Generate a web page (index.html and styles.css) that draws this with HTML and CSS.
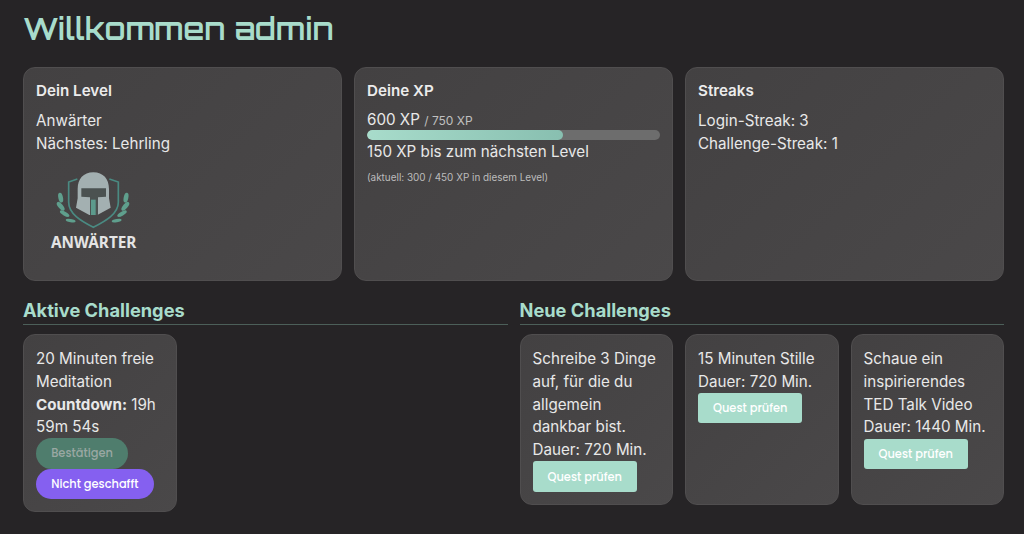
FILE: index.html
```html
<!DOCTYPE html>
<html lang="de">
<head>
<meta charset="utf-8">
<title>Dashboard</title>
<link rel="stylesheet" href="styles.css">
</head>
<body>
<h1 class="welcome">Willkommen admin</h1>
<section class="stats">
  <article class="card">
    <h2 class="card-title">Dein Level</h2>
    <div>Anwärter</div>
    <div>Nächstes: Lehrling</div>
    <svg class="badge" viewBox="0 0 330 270" width="110" height="90" role="img" aria-label="Anwärter">
      <path d="M112 42 L86 51 V112 C86 146 122 168 160 187 C198 168 235 146 235 112 V51 L208 42" fill="none" stroke="#4a8a82" stroke-width="5"/>
      <path d="M160 22 C130 22 113 42 113 72 V100 L108 128 L148 150 H172 L212 128 L207 100 V72 C207 42 190 22 160 22Z" fill="#a3b0b1"/>
      <path d="M124 70 H198 V95 L174 97 V150 H150 V97 L124 95Z" fill="#4b5251"/>
      <rect x="153" y="104" width="14" height="46" fill="#5c9a8c"/>
      <g fill="#5f9f8d">
        <ellipse cx="62" cy="98" rx="7" ry="15" transform="rotate(-12 62 98)"/>
        <ellipse cx="62" cy="124" rx="7" ry="16" transform="rotate(-40 62 124)"/>
        <ellipse cx="74" cy="146" rx="6" ry="16" transform="rotate(-60 74 146)"/>
        <ellipse cx="92" cy="167" rx="5" ry="15" transform="rotate(-80 92 167)"/>
        <ellipse cx="258" cy="98" rx="7" ry="15" transform="rotate(12 258 98)"/>
        <ellipse cx="256" cy="124" rx="7" ry="16" transform="rotate(40 256 124)"/>
        <ellipse cx="246" cy="146" rx="6" ry="16" transform="rotate(60 246 146)"/>
        <ellipse cx="230" cy="167" rx="5" ry="15" transform="rotate(80 230 167)"/>
      </g>
      <text class="badge-text" x="161" y="248" text-anchor="middle">ANWÄRTER</text>
    </svg>
  </article>
  <article class="card">
    <h2 class="card-title">Deine XP</h2>
    <div class="xp-row">600 XP <small class="xp-max">/ 750 XP</small></div>
    <div class="bar"><div class="bar-fill" style="width:67%"></div></div>
    <div>150 XP bis zum nächsten Level</div>
    <p class="hint">(aktuell: 300 / 450 XP in diesem Level)</p>
  </article>
  <article class="card">
    <h2 class="card-title">Streaks</h2>
    <div>Login-Streak: 3</div>
    <div>Challenge-Streak: 1</div>
  </article>
</section>
<section class="columns">
  <div>
    <h2 class="section-title">Aktive Challenges</h2>
    <div class="challenge-grid">
      <article class="card challenge">
        <div>20 Minuten freie Meditation</div>
        <div><strong>Countdown:</strong> 19h 59m 54s</div>
        <button class="pill pill-confirm" type="button">Bestätigen</button>
        <button class="pill pill-fail" type="button">Nicht geschafft</button>
      </article>
    </div>
  </div>
  <div>
    <h2 class="section-title">Neue Challenges</h2>
    <div class="challenge-grid">
      <article class="card challenge">
        <div>Schreibe 3 Dinge auf, für die du allgemein dankbar bist.</div>
        <div>Dauer: 720 Min.</div>
        <button class="quest" type="button">Quest prüfen</button>
      </article>
      <article class="card challenge">
        <div>15 Minuten Stille</div>
        <div>Dauer: 720 Min.</div>
        <button class="quest" type="button">Quest prüfen</button>
      </article>
      <article class="card challenge">
        <div>Schaue ein inspirierendes TED Talk Video</div>
        <div>Dauer: 1440 Min.</div>
        <button class="quest" type="button">Quest prüfen</button>
      </article>
    </div>
  </div>
</section>
</body>
</html>
```
FILE: styles.css
```css
* { box-sizing: border-box; }
html, body { margin: 0; height: 100%; }
body {
  background: #262426;
  color: #e8e8e8;
  font-family: Inter, "Liberation Sans", sans-serif;
  font-size: 15.2px;
  line-height: 22.8px;
  padding: 10px 20px 0 23px;
  overflow: hidden;
}
.welcome {
  margin: 0 0 21px;
  font-family: Orbitron, "DejaVu Sans", sans-serif;
  font-size: 30.4px;
  line-height: 36px;
  font-weight: 600;
  color: #a8dccb;
}
.stats {
  display: grid;
  grid-template-columns: repeat(3, 1fr);
  gap: 12px;
  height: 214px;
}
.card {
  background: linear-gradient(135deg, #434142, #4a4849);
  border: 1px solid #504e4f;
  border-radius: 12px;
  padding: 12px;
}
.challenge { padding-top: 13px; }
.card-title {
  margin: 0 0 8px;
  font-size: 15.2px;
  line-height: 22px;
  font-weight: 600;
  color: #ececec;
}
.xp-row { margin-top: 2px; line-height: 20px; }
.xp-max { font-size: 12px; line-height: 1; color: #c0c0c0; }
.bar {
  height: 10px;
  margin-bottom: 1px;
  border-radius: 5px;
  background: #6d6d6d;
  overflow: hidden;
}
.bar-fill {
  height: 100%;
  border-radius: 5px;
  background: linear-gradient(90deg, #a8dccb, #88bfb0);
}
.hint { margin: 5px 0 0; font-size: 9.920px; line-height: 16px; color: #bcbcbc; }
.badge { display: block; margin: 9.400px 0 0 4px; }
.badge-text { font-family: "Noto Sans", sans-serif; font-size: 46px; font-weight: 700; fill: #e4e4e4; }
.columns {
  display: grid;
  grid-template-columns: 1fr 1fr;
  gap: 12px;
  margin-top: 16px;
}
.section-title {
  margin: 0 0 9px;
  padding: 1px 0;
  font-size: 18.240px;
  line-height: 25px;
  font-weight: 700;
  color: #a8dccb;
  border-bottom: 1.500px solid #4c5f59;
}
.challenge-grid {
  display: grid;
  grid-template-columns: repeat(3, 1fr);
  gap: 12px;
  align-items: stretch;
}
.pill, .quest {
  display: block;
  border: 0;
  font-family: Poppins, "Open Sans", sans-serif;
  font-size: 11.400px;
  font-weight: 500;
  color: #fff;
  line-height: 18px;
  white-space: nowrap;
}
.pill { height: 30.400px; border-radius: 16px; padding: 0 15.200px; }
.pill-confirm { margin-top: -1px; background: #4f7d6d; color: #9aa8a3; }
.pill-fail { background: #8560f0; }
.quest { height: 30.400px; margin-top: -0.600px; padding: 0 15px; border-radius: 3px; background: #a8dccb; width: 104px; }
```
